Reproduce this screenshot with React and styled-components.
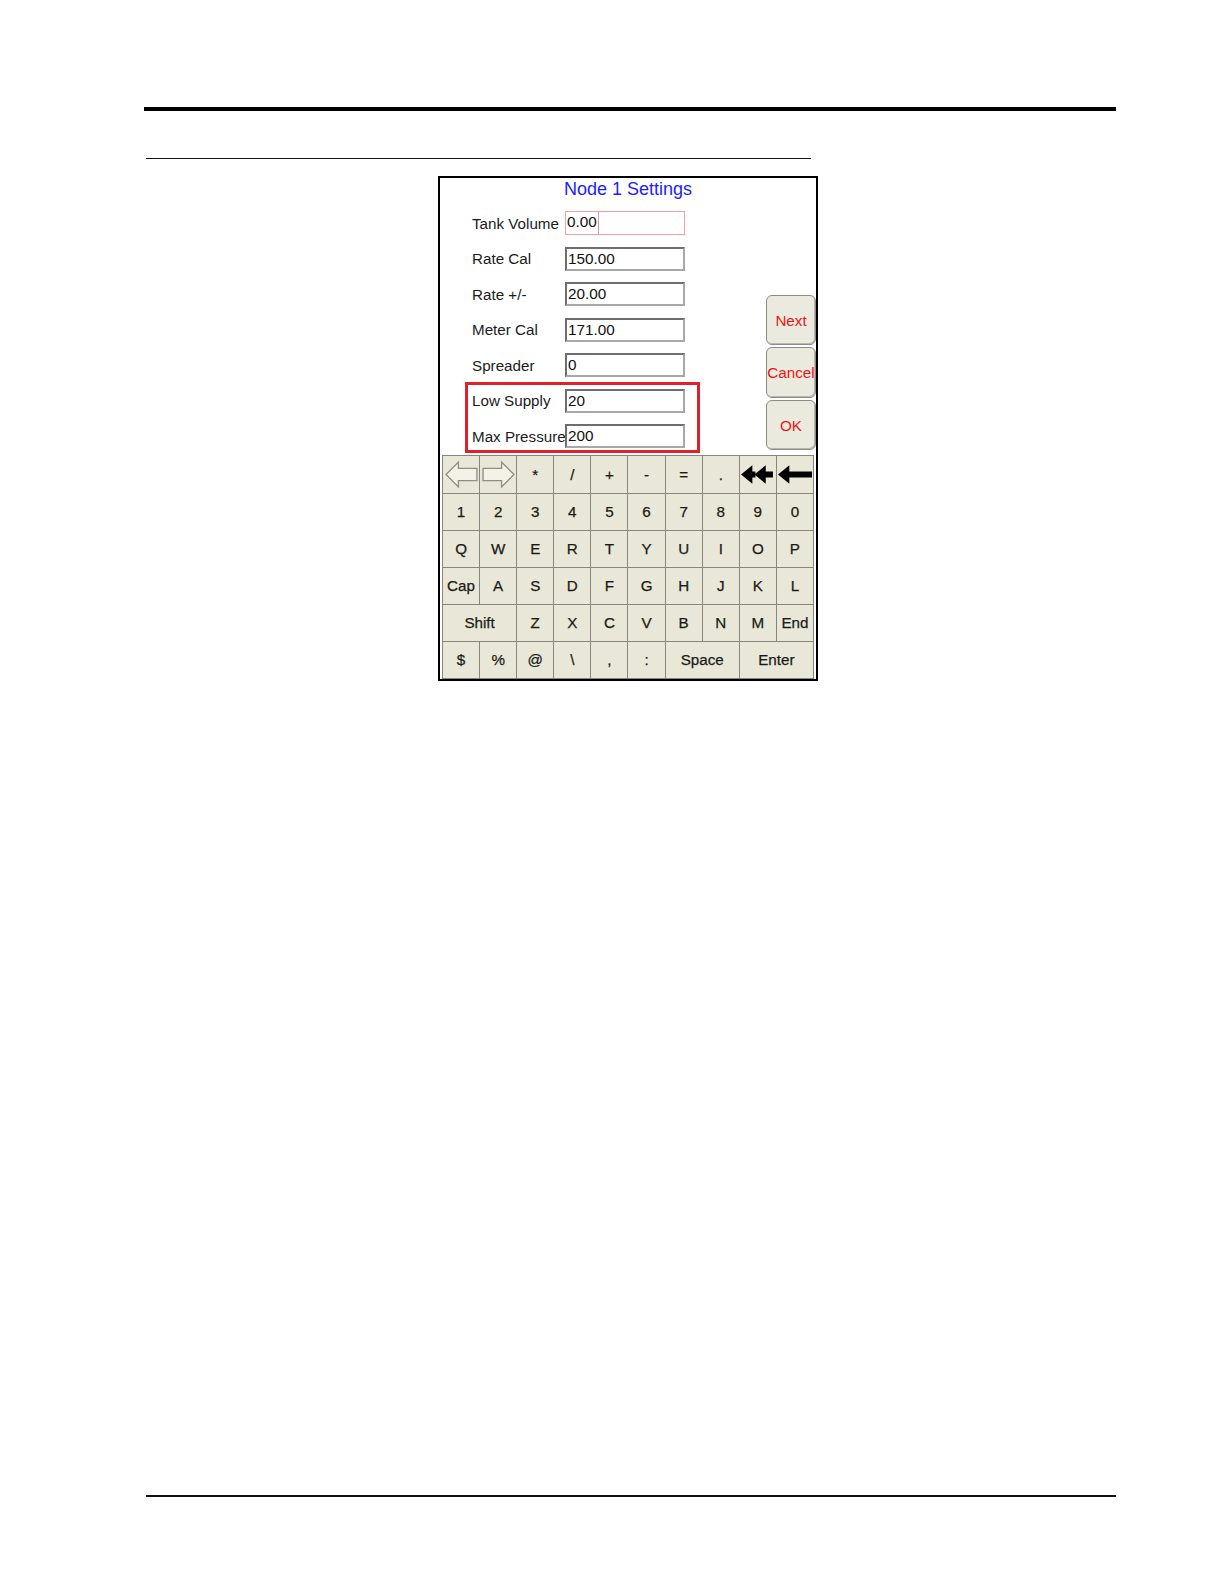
import React from "react";
import styled, { createGlobalStyle } from "styled-components";

const Global = createGlobalStyle`
  html, body {
    margin: 0;
    padding: 0;
    background: #fff;
  }
  body {
    font-family: "Liberation Sans", Arial, sans-serif;
  }
`;

const fields = [
  { label: "Tank Volume", value: "0.00", active: true },
  { label: "Rate Cal", value: "150.00" },
  { label: "Rate +/-", value: "20.00" },
  { label: "Meter Cal", value: "171.00" },
  { label: "Spreader", value: "0" },
];

const highlighted = [
  { label: "Low Supply", value: "20" },
  { label: "Max Pressure", value: "200" },
];

// keyboard rows, span = number of columns
const keys = [
  [{ icon: "left" }, { icon: "right" }, { t: "*" }, { t: "/" }, { t: "+" }, { t: "-" }, { t: "=" }, { t: "." }, { icon: "dbl" }, { icon: "back" }],
  "1234567890".split("").map((t) => ({ t })),
  "QWERTYUIOP".split("").map((t) => ({ t })),
  [{ t: "Cap" }, ..."ASDFGHJKL".split("").map((t) => ({ t }))],
  [{ t: "Shift", span: 2 }, ..."ZXCVBNM".split("").map((t) => ({ t })), { t: "End" }],
  [{ t: "$" }, { t: "%" }, { t: "@" }, { t: "\\" }, { t: "," }, { t: ":" }, { t: "Space", span: 2 }, { t: "Enter", span: 2 }],
];

const Page = styled.div`
  width: 1224px;
  height: 1584px;
  padding: 107px 0 0 144px;
  box-sizing: border-box;
`;

const TopRule = styled.div`
  width: 972px;
  height: 4px;
  background: #000;
`;

const SubRule = styled.div`
  width: 665px;
  height: 1px;
  margin: 47px 0 0 2px;
  background: #111;
`;

const FootRule = styled.div`
  width: 970px;
  height: 2px;
  margin: 814px 0 0 2px;
  background: #111;
`;

const Frame = styled.div`
  width: 380px;
  height: 505px;
  margin: 17px 0 0 294px;
  border: 2px solid #000;
  box-sizing: border-box;
  background: #fff;
  display: flex;
  flex-direction: column;
`;

const Upper = styled.div`
  height: 278px;
  display: flex;
  position: relative;
`;

const Title = styled.div`
  position: absolute;
  top: 1px;
  left: 0;
  right: 0;
  text-align: center;
  font-size: 18px;
  line-height: 20px;
  color: #1d1dff;
`;

const Form = styled.div`
  flex: 1;
  padding: 33px 0 0 32px;
  display: flex;
  flex-direction: column;
  gap: 11.5px;
`;

const Row = styled.div`
  display: flex;
  align-items: center;
  height: 24px;
`;

const Label = styled.div`
  width: 93px;
  font-size: 15.2px;
  color: #1c1c1c;
  white-space: nowrap;
`;

const Input = styled.div`
  width: 120px;
  height: 24px;
  box-sizing: border-box;
  border: 2px solid;
  border-color: ${(p) => (p.$active ? "#f4a0a0" : "#6e6e6e #a8a8a8 #a8a8a8 #6e6e6e")};
  ${(p) => p.$active && "border-width: 1px;"}
  background: #fff;
  font-size: 15.3px;
  line-height: 20px;
  color: #111;
  padding-left: 1px;
  display: flex;
`;

const Selected = styled.span`
  padding-right: 1px;
  border-right: 1px solid #d89a9a;
`;

const Highlight = styled.div`
  width: 235px;
  box-sizing: border-box;
  margin: -6.5px 0 0 -7px;
  padding: 3.5px 4px 2px;
  border: 3px solid #e2202c;
  display: flex;
  flex-direction: column;
  gap: 11.5px;
`;

const Side = styled.div`
  width: 50px;
  display: flex;
  flex-direction: column;
  justify-content: flex-end;
  gap: 2px;
  padding-bottom: 5px;
`;

const SideButton = styled.div`
  height: 50.5px;
  box-sizing: border-box;
  border: 1px solid #8c8c86;
  border-radius: 6px;
  background: #ebeadf;
  box-shadow: inset -1px -1px 0 #b9b8ad;
  display: flex;
  align-items: center;
  justify-content: center;
  font-size: 15.2px;
  color: #f01414;
  white-space: nowrap;
`;

const Keyboard = styled.div`
  margin: 0 2px;
  display: grid;
  grid-template-columns: repeat(10, 1fr);
  grid-template-rows: repeat(6, 1fr);
  height: 223px;
  border-top: 1px solid #86867c;
  border-left: 1px solid #86867c;
  background: #e9e8d8;
`;

const Key = styled.div`
  grid-column: span ${(p) => p.$span || 1};
  border-right: 1px solid #86867c;
  border-bottom: 1px solid #86867c;
  display: flex;
  align-items: center;
  justify-content: center;
  font-size: 15.2px;
  color: #1a1a1a;
  -webkit-text-stroke: 0.25px #1a1a1a;
  overflow: hidden;
`;

const Icon = ({ name }) => {
  if (name === "left")
    return (
      <svg width="35" height="29" viewBox="0 0 34 28">
        <polygon points="2,14 14,2 14,8 32,8 32,20 14,20 14,26" fill="#f3f2e6" stroke="#8e8e86" strokeWidth="1.3" />
      </svg>
    );
  if (name === "right")
    return (
      <svg width="35" height="29" viewBox="0 0 34 28">
        <polygon points="32,14 20,2 20,8 2,8 2,20 20,20 20,26" fill="#f3f2e6" stroke="#8e8e86" strokeWidth="1.3" />
      </svg>
    );
  if (name === "dbl")
    return (
      <svg width="35" height="21" viewBox="0 0 34 20">
        <polygon points="1,10 12,1 12,7 15,7 15,13 12,13 12,19" fill="#000" />
        <polygon points="14,10 25,1 25,7 32,7 32,13 25,13 25,19" fill="#000" />
      </svg>
    );
  return (
    <svg width="35" height="21" viewBox="0 0 34 20">
      <polygon points="1,10 12,1 12,7 34,7 34,13 12,13 12,19" fill="#000" />
    </svg>
  );
};

const Field = ({ label, value, active }) => (
  <Row>
    <Label>{label}</Label>
    <Input $active={active}>{active ? <Selected>{value}</Selected> : value}</Input>
  </Row>
);

export default function App() {
  return (
    <Page>
      <Global />
      <TopRule />
      <SubRule />
      <Frame>
        <Upper>
          <Title>Node 1 Settings</Title>
          <Form>
            {fields.map((f) => (
              <Field key={f.label} {...f} />
            ))}
            <Highlight>
              {highlighted.map((f) => (
                <Field key={f.label} {...f} />
              ))}
            </Highlight>
          </Form>
          <Side>
            <SideButton>Next</SideButton>
            <SideButton>Cancel</SideButton>
            <SideButton>OK</SideButton>
          </Side>
        </Upper>
        <Keyboard>
          {keys.flat().map((k, i) => (
            <Key key={i} $span={k.span}>
              {k.icon ? <Icon name={k.icon} /> : k.t}
            </Key>
          ))}
        </Keyboard>
      </Frame>
      <FootRule />
    </Page>
  );
}
